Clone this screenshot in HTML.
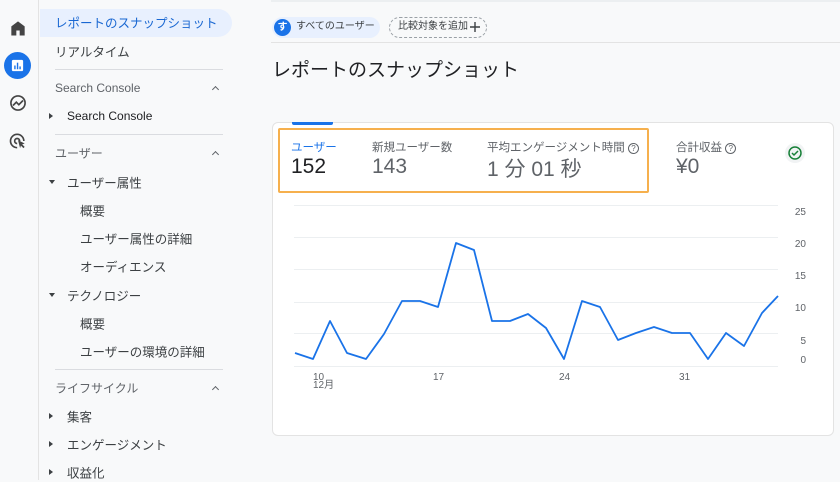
<!DOCTYPE html><html><head><meta charset="utf-8"><style>
*{margin:0;padding:0;box-sizing:border-box}
body{width:840px;height:480px;overflow:hidden;background:#f8f9fa;font-family:"Liberation Sans","Noto Sans CJK JP",sans-serif;position:relative;color:#202124}
.a{position:absolute;white-space:nowrap}
.n{font-size:12.5px;color:#3c4043;transform:translateY(-50%)}
.h{font-size:12px;color:#5f6368;transform:translateY(-50%)}
.sep{position:absolute;left:55px;width:168px;height:1px;background:#dadce0}
.chev{position:absolute;left:213px;width:5px;height:5px;border-left:1.5px solid #5f6368;border-top:1.5px solid #5f6368;transform:rotate(45deg)}
.tri{position:absolute;left:49px;width:0;height:0}
.tr{border-left:4px solid #3c4043;border-top:3px solid transparent;border-bottom:3px solid transparent}
.td{border-top:4px solid #3c4043;border-left:3px solid transparent;border-right:3px solid transparent}
.q{display:inline-block;width:11px;height:11px;border:1.3px solid #5f6368;border-radius:50%;font-size:8px;text-align:center;line-height:9px;vertical-align:0px}
</style></head><body>
<div class="a" style="left:0;top:0;width:39px;height:480px;border-right:1px solid #e3e3e3;background:#f8f9fa"></div>
<svg class="a" style="left:8px;top:18px" width="20" height="20" viewBox="0 0 24 24"><path d="M4 21V10l8-6 8 6v11h-6v-6h-4v6z" fill="#444"/></svg>
<div class="a" style="left:4px;top:52px;width:27px;height:27px;border-radius:50%;background:#1a73e8"></div>
<svg class="a" style="left:10px;top:58px" width="15" height="15" viewBox="0 0 16 16"><rect x="2" y="2" width="12" height="12" rx="1.5" fill="#fff"/><rect x="4.5" y="8" width="1.5" height="4" fill="#1a73e8"/><rect x="7.3" y="5" width="1.5" height="7" fill="#1a73e8"/><rect x="10" y="9" width="1.5" height="3" fill="#1a73e8"/></svg>
<svg class="a" style="left:8px;top:93px" width="20" height="20" viewBox="0 0 24 24"><circle cx="12" cy="12" r="8.5" fill="none" stroke="#444" stroke-width="2"/><path d="M6 15l4-4 3 3 5-5" fill="none" stroke="#444" stroke-width="2"/></svg>
<svg class="a" style="left:8px;top:131px" width="20" height="20" viewBox="0 0 24 24"><path d="M11 20a8 8 0 1 1 8-8" fill="none" stroke="#444" stroke-width="2"/><path d="M11 15a3 3 0 1 1 3-3" fill="none" stroke="#444" stroke-width="2"/><path d="M12 11l8 4-3 1 3 3-1.5 1.5-3-3-1 3z" fill="#444"/></svg>

<div class="a" style="left:40px;top:9px;width:192px;height:28px;border-radius:0 14px 14px 0;background:#e8f0fe"></div>
<div class="a n" style="left:55px;top:22px;color:#1967d2">レポートのスナップショット</div>
<div class="a n" style="left:55px;top:51px">リアルタイム</div>
<div class="sep" style="top:69px"></div>
<div class="a h" style="left:55px;top:88px">Search Console</div><div class="chev" style="top:87px"></div>
<div class="tri tr" style="top:113px"></div><div class="a n" style="left:67px;top:116px;font-size:12px;color:#202124">Search Console</div>
<div class="sep" style="top:134px"></div>
<div class="a h" style="left:55px;top:153px">ユーザー</div><div class="chev" style="top:152px"></div>
<div class="tri td" style="top:180px"></div><div class="a n" style="left:67px;top:182px">ユーザー属性</div>
<div class="a n" style="left:80px;top:210px">概要</div>
<div class="a n" style="left:80px;top:238px">ユーザー属性の詳細</div>
<div class="a n" style="left:80px;top:266px">オーディエンス</div>
<div class="tri td" style="top:293px"></div><div class="a n" style="left:67px;top:295px">テクノロジー</div>
<div class="a n" style="left:80px;top:323px">概要</div>
<div class="a n" style="left:80px;top:351px">ユーザーの環境の詳細</div>
<div class="sep" style="top:369px"></div>
<div class="a h" style="left:55px;top:388px">ライフサイクル</div><div class="chev" style="top:387px"></div>
<div class="tri tr" style="top:413px"></div><div class="a n" style="left:67px;top:416px">集客</div>
<div class="tri tr" style="top:441px"></div><div class="a n" style="left:67px;top:444px">エンゲージメント</div>
<div class="tri tr" style="top:469px"></div><div class="a n" style="left:67px;top:472px">収益化</div>

<div class="a" style="left:271px;top:0;width:569px;height:2px;background:#eceff1"></div>
<div class="a" style="left:272px;top:17px;width:108px;height:21px;border-radius:11px;background:#e8f0fe"></div>
<div class="a" style="left:274px;top:19px;width:17px;height:17px;border-radius:50%;background:#1a73e8;color:#fff;font-size:10px;text-align:center;line-height:17px;font-weight:bold">す</div>
<div class="a" style="left:296px;top:20px;font-size:10px;line-height:14px;color:#3c4043">すべてのユーザー</div>
<div class="a" style="left:389px;top:17px;width:98px;height:21px;border-radius:11px;border:1px dashed #9aa0a6"></div>
<div class="a" style="left:398px;top:20px;font-size:10px;line-height:14px;color:#3c4043">比較対象を追加</div>
<svg class="a" style="left:470px;top:22px" width="10" height="10" viewBox="0 0 10 10"><path d="M5 0v10M0 5h10" stroke="#3c4043" stroke-width="1.4"/></svg>
<div class="a" style="left:271px;top:42px;width:569px;height:1px;background:#e3e3e3"></div>
<div class="a" style="left:272px;top:55px;font-size:19px;color:#202124">レポートのスナップショット</div>

<div class="a" style="left:272px;top:122px;width:562px;height:314px;background:#fff;border:1px solid #e3e3e3;border-radius:6px"></div>
<div class="a" style="left:292px;top:122px;width:41px;height:3px;background:#1a73e8;border-radius:0 0 2px 2px"></div>
<div class="a" style="left:278px;top:128px;width:371px;height:65px;border:2px solid #f6b04d;border-radius:2px"></div>
<div class="a" style="left:291px;top:139px;font-size:11.5px;color:#1a73e8">ユーザー</div>
<div class="a" style="left:291px;top:155px;font-size:21px;color:#202124">152</div>
<div class="a" style="left:372px;top:139px;font-size:11.5px;color:#5f6368">新規ユーザー数</div>
<div class="a" style="left:372px;top:155px;font-size:21px;color:#5f6368">143</div>
<div class="a" style="left:487px;top:139px;font-size:11.5px;color:#5f6368">平均エンゲージメント時間 <span class="q">?</span></div>
<div class="a" style="left:487px;top:153px;font-size:21px;color:#5f6368">1 分 01 秒</div>
<div class="a" style="left:676px;top:139px;font-size:11.5px;color:#5f6368">合計収益 <span class="q">?</span></div>
<div class="a" style="left:676px;top:155px;font-size:21px;color:#5f6368">¥0</div>
<svg class="a" style="left:784px;top:142px" width="22" height="22" viewBox="0 0 22 22"><circle cx="11" cy="11" r="10" fill="#f1f3f4"/><circle cx="11" cy="11" r="6" fill="none" stroke="#188038" stroke-width="1.5"/><path d="M8 11l2 2 4-4" fill="none" stroke="#188038" stroke-width="1.5"/></svg>

<svg class="a" style="left:0;top:0" width="840" height="480">
<g stroke="#eceff1" stroke-width="1"><line x1="294" y1="205.5" x2="778" y2="205.5"/><line x1="294" y1="237.5" x2="778" y2="237.5"/><line x1="294" y1="269.5" x2="778" y2="269.5"/><line x1="294" y1="302.5" x2="778" y2="302.5"/><line x1="294" y1="333.5" x2="778" y2="333.5"/><line x1="294" y1="366.5" x2="778" y2="366.5"/></g>
<polyline fill="none" stroke="#1a73e8" stroke-width="1.8" stroke-linejoin="round" points="295,353 313,359 330,321 347,353 366,359 384,334 402,301 420,301 438,307 456,243 474,250 492,321 510,321 528,314 546,328 564,359 582,301 600,307 618,340 636,333 654,327 672,333 690,333 708,359 726,333 744,346 762,313 778,296"/>
<g font-size="10" fill="#5f6368" font-family="Liberation Sans,sans-serif" text-anchor="end"><text x="806" y="215">25</text><text x="806" y="247">20</text><text x="806" y="279">15</text><text x="806" y="311">10</text><text x="806" y="344">5</text><text x="806" y="363">0</text></g>
<g font-size="10" fill="#5f6368" font-family="Liberation Sans,Noto Sans CJK JP,sans-serif"><text x="313" y="380">10</text><text x="313" y="388">12月</text><text x="433" y="380">17</text><text x="559" y="380">24</text><text x="679" y="380">31</text></g>
</svg>
</body></html>
